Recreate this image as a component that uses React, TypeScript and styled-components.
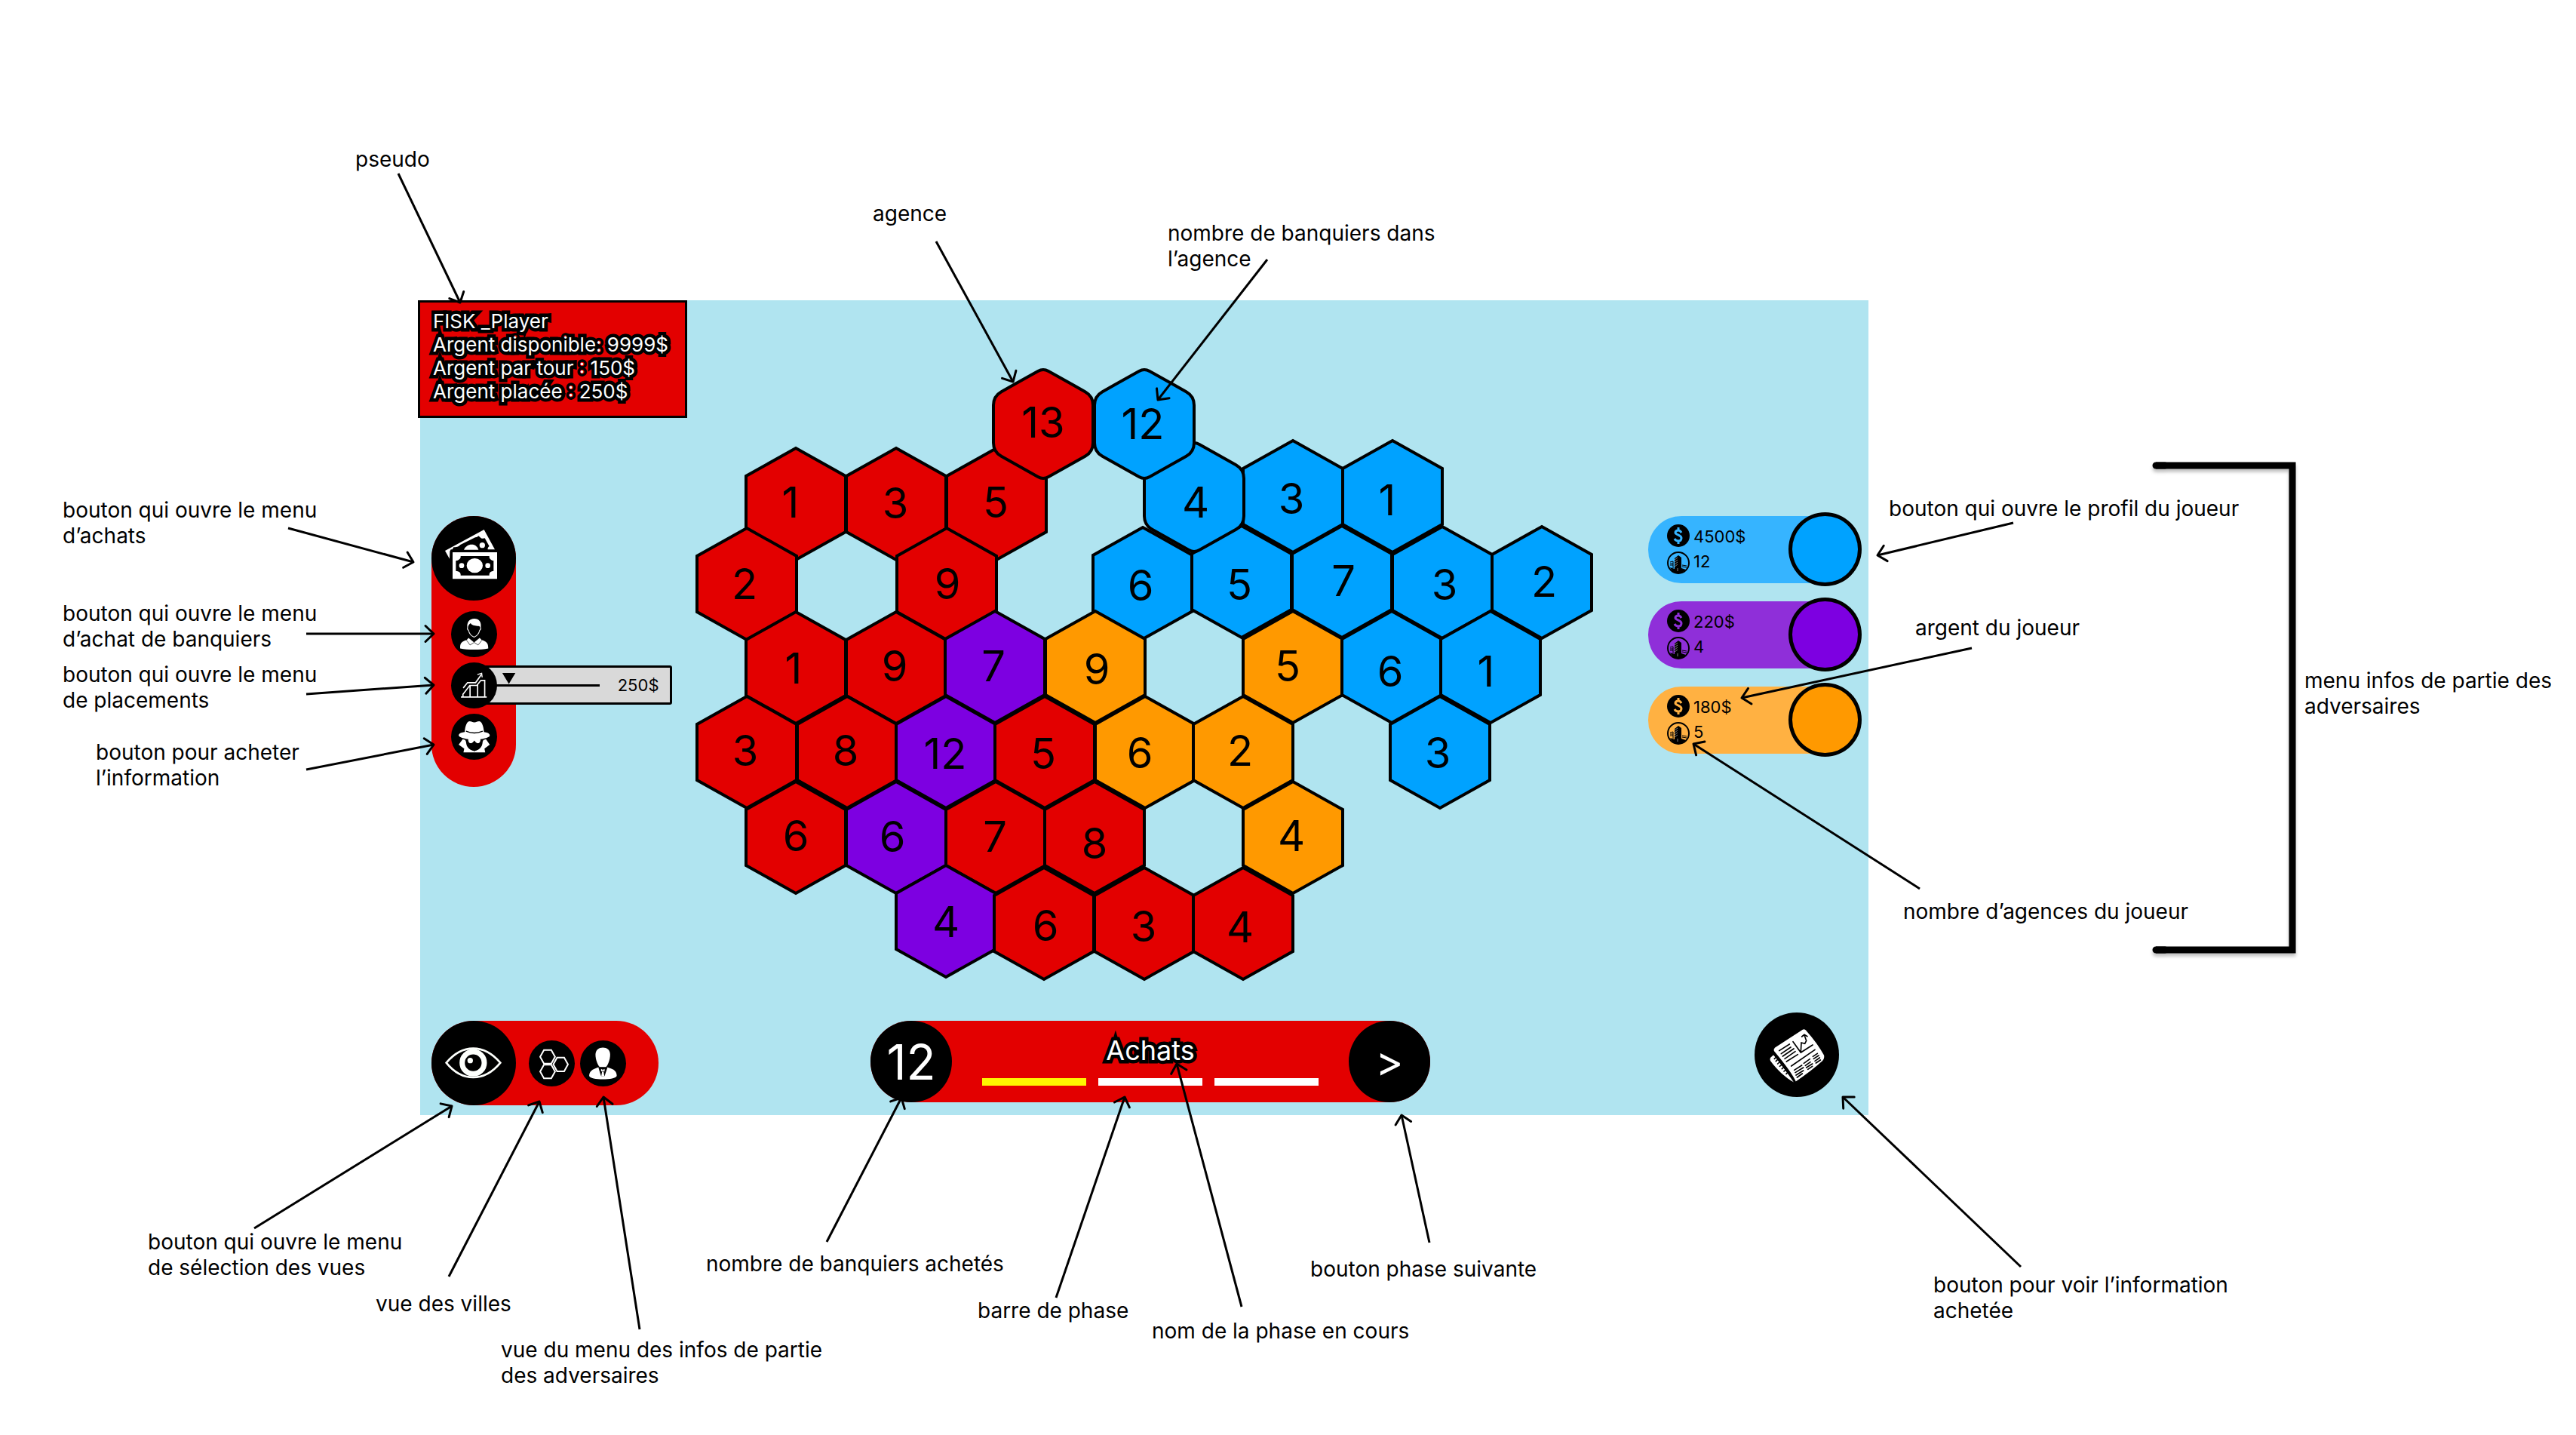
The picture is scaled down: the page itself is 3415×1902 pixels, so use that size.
import React, { useState } from 'react';
import styled, { createGlobalStyle } from 'styled-components';

const RED = '#e30000';
const BLUE = '#00a2ff';
const PURPLE = '#7d00e1';
const ORANGE = '#ff9900';
const SEA = '#b0e4f0';

const CANVAS_W = 3415;
const CANVAS_H = 1902;

const GlobalStyle = createGlobalStyle`
  *, *::before, *::after { box-sizing: border-box; }
  body {
    margin: 0;
    background: #fff;
    color: #000;
    font-family: Inter, "Liberation Sans", sans-serif;
  }
  button { font: inherit; color: inherit; border: 0; padding: 0; cursor: pointer; }
`;

const Canvas = styled.main`
  position: relative;
  width: 100%;
  aspect-ratio: ${CANVAS_W} / ${CANVAS_H};
  padding-top: calc(100% * 398 / ${CANVAS_W});
  padding-left: calc(100% * 557 / ${CANVAS_W});
  overflow: hidden;
`;

const Board = styled.section`
  width: calc(100% * 1920 / 2858);
  min-height: 1080px;
  background: ${SEA};
  display: grid;
  grid-template-columns: 354px 1fr 292px;
  grid-template-rows: 156px auto 1fr;
`;

const PlayerInfo = styled.header`
  width: 357px;
  height: 156px;
  margin-left: -3px;
  padding: 9px 17px;
  border: 3px solid #000;
  background: ${RED};
`;

const Outlined = styled.p<{ $size: number; $line: number }>`
  margin: 0;
  color: #fff;
  font-size: ${(p) => p.$size}px;
  line-height: ${(p) => p.$line}px;
  white-space: nowrap;
  -webkit-text-stroke: 9px #000;
  paint-order: stroke fill;
`;

const Tools = styled.nav`
  grid-column: 1;
  grid-row: 2;
  justify-self: start;
  align-self: start;
  width: 112px;
  height: 359px;
  margin: 130px 0 0 15px;
  border-radius: 56px;
  background: ${RED};
  display: flex;
  flex-direction: column;
  align-items: center;
  gap: 7px;
`;

const RoundButton = styled.button<{ $size: number }>`
  position: relative;
  flex: none;
  width: ${(p) => p.$size}px;
  height: ${(p) => p.$size}px;
  border-radius: 50%;
  background: #000;
  svg { display: block; width: 100%; height: 100%; }
`;

const MainTool = styled(RoundButton)`
  margin-bottom: 7px;
`;

const ToolSlot = styled.div`
  position: relative;
  display: flex;
`;

const Popover = styled.form`
  position: absolute;
  top: 4px;
  left: 30px;
  width: 263px;
  height: 52px;
  padding: 0 14px 0 26px;
  border: 3px solid #000;
  border-radius: 3px;
  background: #d9d9d9;
  display: flex;
  align-items: center;
  justify-content: space-between;
`;

const Slider = styled.input`
  appearance: none;
  width: 138px;
  height: 34px;
  margin: 0;
  background: transparent;
  &::-webkit-slider-runnable-track { height: 3px; background: #000; }
  &::-webkit-slider-thumb {
    appearance: none;
    width: 18px;
    height: 15px;
    margin-top: -15px;
    background: #000;
    clip-path: polygon(0 0, 100% 0, 50% 100%);
  }
`;

const Amount = styled.output`
  font-size: 22px;
  line-height: 27px;
`;

const MapArea = styled.div`
  grid-column: 2;
  grid-row: 1 / 3;
  svg { display: block; width: 100%; }
`;

const HexCount = styled.text`
  font-size: 56px;
  text-anchor: middle;
`;

const Opponents = styled.aside`
  grid-column: 3;
  grid-row: 1 / 3;
  padding: 281px 9px 0 0;
  display: flex;
  flex-direction: column;
  gap: 15px;
`;

const Opponent = styled.article`
  height: 98px;
  display: flex;
  align-items: center;
`;

const OpponentPill = styled.div<{ $bg: string }>`
  flex: 1;
  height: 89px;
  margin-right: -48px;
  padding-left: 25px;
  border-radius: 44px 0 0 44px;
  background: ${(p) => p.$bg};
  display: flex;
  align-items: center;
  gap: 5px;
`;

const StatIcons = styled.div`
  display: flex;
  flex-direction: column;
  gap: 6px;
  svg { display: block; width: 30px; height: 30px; }
`;

const StatValues = styled.div`
  display: flex;
  flex-direction: column;
  font-size: 22px;
  line-height: 33px;
`;

const ProfileButton = styled.button<{ $bg: string }>`
  width: 97px;
  height: 98px;
  border: 5px solid #000;
  border-radius: 50%;
  background: ${(p) => p.$bg};
`;

const Footer = styled.footer`
  grid-column: 1 / 4;
  grid-row: 3;
  padding: 20px 39px 0 15px;
  display: grid;
  grid-template-columns: 582px 742px 1fr;
  align-items: start;
`;

const Views = styled.nav`
  width: 301px;
  height: 112px;
  margin-top: 11px;
  border-radius: 56px;
  background: ${RED};
  display: flex;
  align-items: center;
  gap: 7px;
`;

const MainView = styled(RoundButton)`
  margin-right: 10px;
`;

const Phase = styled.section`
  height: 108px;
  margin-top: 11px;
  border-radius: 54px;
  background: ${RED};
  display: flex;
`;

const PhaseCount = styled.output`
  width: 108px;
  border-radius: 50%;
  background: #000;
  color: #fff;
  font-size: 64px;
  display: flex;
  align-items: center;
  justify-content: center;
`;

const NextButton = styled.button`
  width: 108px;
  border-radius: 50%;
  background: #000;
  && { color: #fff; font-size: 56px; }
`;

const PhaseBody = styled.div`
  flex: 1;
  padding-top: 17px;
  display: flex;
  flex-direction: column;
  align-items: center;
  gap: 15px;
`;

const Steps = styled.ol`
  margin: 0;
  padding: 0;
  list-style: none;
  display: flex;
  gap: 16px;
`;

const Step = styled.li<{ $active?: boolean }>`
  width: 138px;
  height: 10px;
  background: ${(p) => (p.$active ? '#fff500' : '#fff')};
`;

const NewsButton = styled(RoundButton)`
  justify-self: end;
`;

const Arrows = styled.svg`
  position: absolute;
  inset: 0;
  width: 100%;
  height: 100%;
  pointer-events: none;
  fill: none;
  stroke: #000;
  stroke-width: 3;
`;

const Note = styled.p<{ $x: number; $y: number }>`
  position: absolute;
  left: calc(100% * ${(p) => p.$x} / ${CANVAS_W});
  top: calc(100% * ${(p) => p.$y} / ${CANVAS_H});
  margin: 0;
  font-size: 28px;
  line-height: 34px;
  white-space: pre;
`;

type Hex = {
  x: number;
  y: number;
  fill: string;
  n: number;
  /* anchor of the count inside the cell */
  tx: number;
  ty: number;
  rounded?: boolean;
};

const h = (x: number, y: number, fill: string, n: number, tx: number, ty: number, rounded = false): Hex => ({
  x, y, fill, n, tx, ty, rounded,
});

const HEXES: Hex[] = [
  h(1055, 668, RED, 1, 1048, 686),
  h(1188, 668, RED, 3, 1187, 687),
  h(1321, 668, RED, 5, 1320, 686),
  h(1714, 658, BLUE, 3, 1712, 681),
  h(1846, 658, BLUE, 1, 1839, 683),
  h(990, 774, RED, 2, 987, 794),
  h(1255, 774, RED, 9, 1256, 794),
  h(1515, 773, BLUE, 6, 1512, 796),
  h(1646, 771, BLUE, 5, 1643, 795),
  h(1779, 771, BLUE, 7, 1781, 790),
  h(1912, 772, BLUE, 3, 1915, 795),
  h(2044, 772, BLUE, 2, 2047, 791),
  h(1055, 885, RED, 1, 1052, 906),
  h(1188, 885, RED, 9, 1186, 903),
  h(1319, 884, PURPLE, 7, 1317, 903),
  h(1452, 884, ORANGE, 9, 1454, 907),
  h(1714, 884, ORANGE, 5, 1707, 903),
  h(1845, 884, BLUE, 6, 1843, 910),
  h(1976, 884, BLUE, 1, 1970, 910),
  h(990, 997, RED, 3, 988, 1015),
  h(1123, 997, RED, 8, 1121, 1015),
  h(1254, 997, PURPLE, 12, 1253, 1019),
  h(1385, 997, RED, 5, 1383, 1019),
  h(1518, 997, ORANGE, 6, 1511, 1018),
  h(1648, 997, ORANGE, 2, 1644, 1015),
  h(1909, 997, BLUE, 3, 1906, 1018),
  h(1055, 1110, RED, 6, 1055, 1128),
  h(1188, 1110, PURPLE, 6, 1183, 1129),
  h(1320, 1110, RED, 7, 1319, 1129),
  h(1451, 1110, RED, 8, 1451, 1138),
  h(1714, 1110, ORANGE, 4, 1712, 1128),
  h(1254, 1221, PURPLE, 4, 1254, 1242),
  h(1384, 1224, RED, 6, 1386, 1247),
  h(1517, 1224, RED, 3, 1516, 1248),
  h(1648, 1224, RED, 4, 1644, 1249),
  h(1583, 659, BLUE, 4, 1585, 686, true),
  h(1383, 562, RED, 13, 1383, 580, true),
  h(1517, 562, BLUE, 12, 1515, 582, true),
];

const CORNERS: [number, number][] = [[0, -74], [66, -37], [66, 37], [0, 74], [-66, 37], [-66, -37]];
const SHARP = `M${CORNERS.map((c) => c.join(' ')).join('L')}Z`;
const ROUNDED = (() => {
  const toward = (a: [number, number], b: [number, number], d: number) => {
    const l = Math.hypot(b[0] - a[0], b[1] - a[1]);
    return `${a[0] + ((b[0] - a[0]) * d) / l} ${a[1] + ((b[1] - a[1]) * d) / l}`;
  };
  return `${CORNERS.map((c, i) => {
    const prev = CORNERS[(i + 5) % 6];
    const next = CORNERS[(i + 1) % 6];
    const cut = i % 3 === 0 ? 8 : 12;
    return `${i ? 'L' : 'M'}${toward(c, prev, cut)}Q${c.join(' ')} ${toward(c, next, cut)}`;
  }).join('')}Z`;
})();

/* [tail x, tail y, tip x, tip y] */
const ARROWS: [number, number, number, number][] = [
  [528, 230, 610, 401],
  [1241, 320, 1343, 506],
  [1680, 344, 1535, 530],
  [382, 700, 548, 745],
  [406, 840, 575, 840],
  [406, 920, 575, 908],
  [406, 1020, 575, 987],
  [2669, 693, 2489, 736],
  [2614, 859, 2309, 925],
  [2545, 1178, 2245, 986],
  [337, 1628, 599, 1466],
  [595, 1692, 715, 1460],
  [848, 1762, 800, 1454],
  [1096, 1646, 1195, 1455],
  [1400, 1720, 1491, 1454],
  [1646, 1732, 1560, 1410],
  [1895, 1647, 1858, 1478],
  [2679, 1679, 2443, 1454],
];

const NOTES: [number, number, string][] = [
  [471, 194, 'pseudo'],
  [1157, 266, 'agence'],
  [1548, 292, 'nombre de banquiers dans\nl’agence'],
  [83, 659, 'bouton qui ouvre le menu\nd’achats'],
  [83, 796, 'bouton qui ouvre le menu\nd’achat de banquiers'],
  [83, 877, 'bouton qui ouvre le menu\nde placements'],
  [127, 980, 'bouton pour acheter\nl’information'],
  [196, 1629, 'bouton qui ouvre le menu\nde sélection des vues'],
  [498, 1711, 'vue des villes'],
  [664, 1772, 'vue du menu des infos de partie\ndes adversaires'],
  [936, 1658, 'nombre de banquiers achetés'],
  [1296, 1720, 'barre de phase'],
  [1527, 1747, 'nom de la phase en cours'],
  [1737, 1665, 'bouton phase suivante'],
  [2563, 1686, 'bouton pour voir l’information\nachetée'],
  [2504, 657, 'bouton qui ouvre le profil du joueur'],
  [2539, 815, 'argent du joueur'],
  [2523, 1191, 'nombre d’agences du joueur'],
  [3055, 885, 'menu infos de partie des\nadversaires'],
];

const OPPONENTS = [
  { name: 'bleu', color: BLUE, pill: '#36b4ff', money: '4500$', agencies: 12 },
  { name: 'violet', color: PURPLE, pill: '#8f2fd9', money: '220$', agencies: 4 },
  { name: 'orange', color: ORANGE, pill: '#ffb142', money: '180$', agencies: 5 },
];

function Arrow({ at: [x1, y1, x2, y2] }: { at: [number, number, number, number] }) {
  const angle = (Math.atan2(y2 - y1, x2 - x1) * 180) / Math.PI;
  return (
    <>
      <path d={`M${x1} ${y1}L${x2} ${y2}`} />
      <path
        d="M-11 -10.500L0 0L-11 10.500"
        strokeLinecap="round"
        strokeLinejoin="round"
        transform={`translate(${x2} ${y2}) rotate(${angle})`}
      />
    </>
  );
}

const BanknotesIcon = () => (
  <svg viewBox="96 72 336 336" fill="#fff" aria-hidden="true">
    <path d="M150 210L305 126L348 205H173L169 212L168 242Z" />
    <path fill="#000" d="M178 207L184 196C200 196 208 190 211 186L270 157C278 157 281 153 283 151L290 157C294 163 303 162 308 160L326 192C320 196 319 201 320 207Z" />
    <path d="M225 206C230 193 242 185 256 185C270 185 279 193 283 206Z" />
    <circle cx="298" cy="188" r="11" />
    <path d="M180 216H357V322H180Z" />
    <path fill="#000" d="M212 231H326V236Q328 246 343 250V290Q328 291 326 303V308H212V303Q210 291 193 290V250Q210 246 212 236Z" />
    <ellipse cx="268" cy="269" rx="32" ry="29" />
    <circle cx="216" cy="269" r="10" />
    <circle cx="320" cy="269" r="10" />
  </svg>
);

const BankerIcon = () => (
  <svg viewBox="174 450 182 182" fill="#fff" aria-hidden="true">
    <path d="M239 519C234 495 246 480 266 480C284 480 296 493 291 519C289 509 285 510 278 509C266 508 256 506 251 498C243 503 242 510 239 519Z" />
    <path fill="none" stroke="#fff" strokeWidth="3" d="M240 514Q236 521 243 526Q247 546 265 553Q283 546 287 526Q294 521 290 514" />
    <path d="M210 598C209 578 214 570 236 564L243 556L265 574L287 556L295 564C316 570 321 578 321 598C290 604 240 604 210 598Z" />
    <path fill="none" stroke="#000" strokeWidth="2" d="M235 565L249 584L265 574L281 584L296 565" />
  </svg>
);

const GrowthIcon = () => (
  <svg viewBox="171 654 182 182" fill="none" stroke="#fff" strokeWidth="5" aria-hidden="true">
    <path d="M210 791H312M218 790V780L245 745H273L289 725H304V790M246 745V790M276 743V790" />
    <path d="M219 755L236 734H268L291 702" />
    <path strokeWidth="4" d="M275 702L292 697L294 713" />
  </svg>
);

const SpyIcon = () => (
  <svg viewBox="168 858 182 182" fill="#fff" aria-hidden="true">
    <path d="M222 930C224 903 232 888 241 888C250 888 252 892 260 892C268 892 270 888 279 888C288 888 296 903 298 930C321 932 324 943 319 948C305 957 280 960 260 960C240 960 215 957 201 948C195 943 198 932 222 930Z" />
    <path fill="none" stroke="#000" strokeWidth="4" d="M227 927Q260 941 293 927" />
    <path d="M236 956H284C285 968 281 975 274 975C267 975 264 969 260 964C256 969 253 975 246 975C239 975 235 968 236 956Z" />
    <path d="M214 959L224 962Q225 969 231 970Q236 1000 260 1006Q284 1000 289 970Q295 969 296 962L306 959L321 980L300 996L303 1011H217L220 996L198 980Z" />
    <path fill="#000" d="M227 964C231 972 239 974 246 976C254 975 257 970 260 967C263 970 266 975 274 976C281 974 289 972 293 964C293 985 286 999 260 1006C234 999 227 985 227 964Z" />
  </svg>
);

const EyeIcon = () => (
  <svg viewBox="94 104 336 336" fill="none" stroke="#fdfffc" aria-hidden="true">
    <path strokeWidth="8" d="M153 271C190 227 228 214 260 214S330 227 368 271C330 317 292 329 260 329S190 317 153 271Z" />
    <circle cx="260" cy="271" r="44" strokeWidth="21" />
    <circle cx="248" cy="262" r="11" fill="#fdfffc" stroke="none" />
  </svg>
);

const HiveIcon = () => (
  <svg viewBox="484 183 182 182" fill="none" stroke="#fff" strokeWidth="6" aria-hidden="true">
    <path d="M529 248L544 221H573L588 248L573 275H544Z" />
    <path d="M529 306L544 279H573L588 306L573 333H544Z" />
    <path d="M581 278L596 251H624L639 278L624 305H596Z" />
  </svg>
);

const RivalIcon = () => (
  <svg viewBox="687 185 182 182" fill="#fff" aria-hidden="true">
    <path d="M748 241C748 222 762 213 777 213C793 213 806 222 806 241C806 262 796 287 787 292H767C758 287 748 262 748 241Z" />
    <path d="M723 325C723 306 738 299 760 291H794C820 299 832 306 832 325C828 343 726 343 723 325Z" />
    <path fill="#000" d="M759 290H796L784 326H770Z" />
    <path d="M770 298L777 301L784 298V308L777 305L770 308ZM774 308H780L783 326H771Z" />
  </svg>
);

const NewsIcon = () => (
  <svg viewBox="78 70 336 336" fill="none" stroke="#000" strokeWidth="5" strokeLinecap="round" aria-hidden="true">
    <path fill="#fff" stroke="none" d="M141 250L154 238L236 348C200 330 165 295 141 262Q138 256 141 250Z" />
    <path fill="#fff" d="M157 208L268 136Q278 131 285 140Q330 190 357 240Q359 254 350 264Q305 305 241 348Q225 310 153 224Q150 214 157 208Z" />
    <path d="M154 236Q195 280 236 346" />
    <path d="M157 254L166 246M163 264L172 255M170 274L180 265M178 284L188 276M187 294L196 286M195 304L204 296M204 314L212 306" />
    <path d="M176 222L217 196M184 234L222 208M190 244L234 214M198 254L240 225M205 265L250 237" />
    <path d="M231 186L262 229L309 199M262 227L264 190L278 194L284 182L276 160M266 166L276 158L288 165" />
    <path d="M224 283L318 218" />
    <path d="M236 299L266 280M240 309L272 289M243 319L272 301M247 328L268 313" />
    <path d="M274 272L298 255M280 281L300 267M284 289L308 274M290 296L308 284" />
    <path d="M310 245L328 233M313 254L333 241M318 263L337 250M322 271L340 259" />
  </svg>
);

const CoinIcon = ({ color }: { color: string }) => (
  <svg viewBox="0 0 30 30" aria-hidden="true">
    <circle cx="15" cy="15" r="15" />
    <path
      fill="none"
      stroke={color}
      strokeWidth="3"
      d="M19 11C18 9 17 8 15 8C12 8 11 9 11 11C11 14 19 14 19 18C19 21 17 22 15 22C12 22 11 21 10 19M15 4V8M15 22V26"
    />
  </svg>
);

const AgencyIcon = () => (
  <svg viewBox="0 0 30 30" aria-hidden="true">
    <circle cx="15" cy="15" r="14" fill="none" stroke="#000" strokeWidth="2" />
    <path d="M4 21L10 23V9L15 5L19 8V22L25 24C22 27 19 29 15 29C10 29 6 26 4 21Z" />
    <path fill="none" stroke="#000" d="M4 14L8 13V22M4 16H8M4 18H8M20 18L26 19M20 20L26 21" />
    <path fill="none" stroke="#fff" strokeOpacity=".5" d="M10 11L14 8M10 14L14 11M10 17L14 14M10 20L14 17M14 22V26" />
  </svg>
);

export default function App() {
  const [placement, setPlacement] = useState(250);
  return (
    <>
      <GlobalStyle />
      <Canvas>
        <Board>
          <PlayerInfo>
            <Outlined $size={26} $line={31}>FISK _Player</Outlined>
            <Outlined $size={26} $line={31}>Argent disponible: 9999$</Outlined>
            <Outlined $size={26} $line={31}>Argent par tour : 150$</Outlined>
            <Outlined $size={26} $line={31}>Argent placée : 250$</Outlined>
          </PlayerInfo>

          <Tools aria-label="Achats">
            <MainTool $size={112} aria-label="Menu d’achats"><BanknotesIcon /></MainTool>
            <RoundButton $size={61} aria-label="Acheter des banquiers"><BankerIcon /></RoundButton>
            <ToolSlot>
              <Popover>
                <Slider
                  type="range"
                  aria-label="Placement"
                  min={0}
                  max={3300}
                  step={50}
                  value={placement}
                  onChange={(e) => setPlacement(Number(e.target.value))}
                />
                <Amount>{placement}$</Amount>
              </Popover>
              <RoundButton $size={61} aria-label="Placements"><GrowthIcon /></RoundButton>
            </ToolSlot>
            <RoundButton $size={61} aria-label="Acheter l’information"><SpyIcon /></RoundButton>
          </Tools>

          <MapArea>
            <svg viewBox="911 398 1274 924" role="img" aria-label="Carte des agences">
              {HEXES.map((c) => (
                <g key={`${c.x}-${c.y}`}>
                  <path
                    d={c.rounded ? ROUNDED : SHARP}
                    transform={`translate(${c.x} ${c.y})`}
                    fill={c.fill}
                    stroke="#000"
                    strokeWidth="4"
                  />
                  <HexCount x={c.tx} y={c.ty}>{c.n}</HexCount>
                </g>
              ))}
            </svg>
          </MapArea>

          <Opponents>
            {OPPONENTS.map((o) => (
              <Opponent key={o.name}>
                <OpponentPill $bg={o.pill}>
                  <StatIcons>
                    <CoinIcon color={o.pill} />
                    <AgencyIcon />
                  </StatIcons>
                  <StatValues>
                    <span>{o.money}</span>
                    <span>{o.agencies}</span>
                  </StatValues>
                </OpponentPill>
                <ProfileButton $bg={o.color} aria-label={`Profil du joueur ${o.name}`} />
              </Opponent>
            ))}
          </Opponents>

          <Footer>
            <Views aria-label="Vues">
              <MainView $size={112} aria-label="Sélection des vues"><EyeIcon /></MainView>
              <RoundButton $size={61} aria-label="Vue des villes"><HiveIcon /></RoundButton>
              <RoundButton $size={61} aria-label="Vue des adversaires"><RivalIcon /></RoundButton>
            </Views>
            <Phase>
              <PhaseCount>12</PhaseCount>
              <PhaseBody>
                <Outlined $size={36} $line={44}>Achats</Outlined>
                <Steps>
                  <Step $active />
                  <Step />
                  <Step />
                </Steps>
              </PhaseBody>
              <NextButton aria-label="Phase suivante">&gt;</NextButton>
            </Phase>
            <NewsButton $size={112} aria-label="Information achetée"><NewsIcon /></NewsButton>
          </Footer>
        </Board>

        <Arrows viewBox={`0 0 ${CANVAS_W} ${CANVAS_H}`} aria-hidden="true">
          {ARROWS.map((a) => <Arrow key={a.join()} at={a} />)}
          <g strokeWidth="9" style={{ filter: 'drop-shadow(0 4px 2px rgba(0,0,0,.25))' }}>
            <path d="M2858 617H3039V1259H2858" />
            <path strokeLinecap="round" d="M2858 617H2870M2858 1259H2870" />
          </g>
        </Arrows>

        {NOTES.map(([x, y, text]) => (
          <Note key={`${x}-${y}`} $x={x} $y={y}>{text}</Note>
        ))}
      </Canvas>
    </>
  );
}
